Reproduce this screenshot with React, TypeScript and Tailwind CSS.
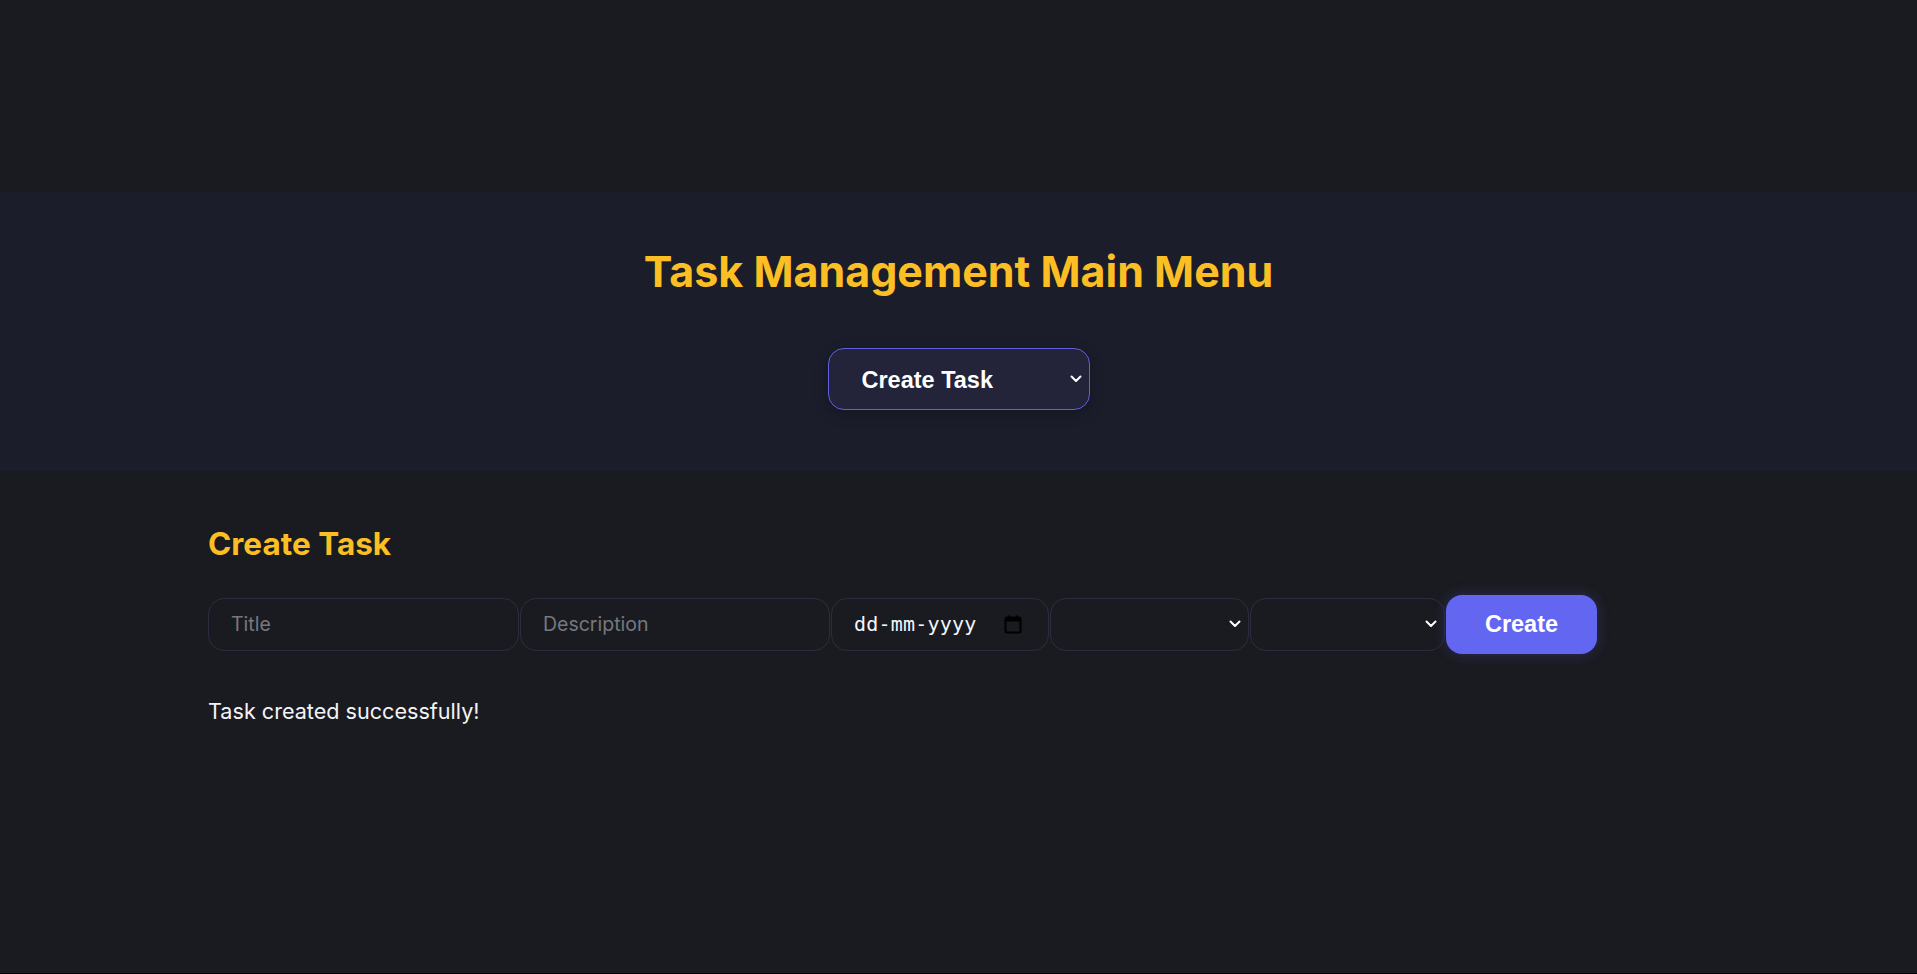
import { useState } from "react";

const Chevron = () => (
  <svg
    className="pointer-events-none absolute right-[8px] top-1/2 -translate-y-1/2"
    width="12"
    height="8"
    viewBox="0 0 12 8"
    fill="none"
  >
    <path d="M1.5 1.5 6 6l4.5-4.5" stroke="#ffffff" strokeWidth="2" strokeLinecap="round" strokeLinejoin="round" />
  </svg>
);

const CalendarIcon = () => (
  <svg width="18" height="19" viewBox="0 0 18 19" fill="none">
    <rect x="4" y="0.5" width="2" height="3" fill="#000" />
    <rect x="12" y="0.5" width="2" height="3" fill="#000" />
    <rect x="1.5" y="2.5" width="15" height="15" rx="1.5" stroke="#000" strokeWidth="2" />
    <rect x="1.5" y="2.5" width="15" height="4" fill="#000" />
  </svg>
);

export default function App() {
  const [view, setView] = useState("create");

  return (
    <div className="min-h-[974px] bg-[#1a1b20] font-['Inter',sans-serif] border-b border-black">
      <div className="h-[192px]" />

      <header className="h-[279px] bg-[#1b1d2b] flex flex-col items-center pt-[58px]">
        <h1 className="text-[43px] leading-none font-bold text-[#fbbf24]">Task Management Main Menu</h1>
        <div className="relative mt-[55px]">
          <select
            value={view}
            onChange={(e) => setView(e.target.value)}
            className="appearance-none w-[262px] h-[62px] rounded-[16px] border border-[#5f5fe0] bg-[#23243a] pl-[33px] pt-[4px] text-[23.5px] font-bold text-white font-['Liberation_Sans',sans-serif] outline-none shadow-[0_4px_14px_rgba(0,0,0,0.25)]"
          >
            <option value="create">Create Task</option>
            <option value="list">View Tasks</option>
          </select>
          <Chevron />
        </div>
      </header>

      <section className="px-[208px] pt-[57px]">
        <h2 className="text-[31.5px] leading-none font-bold text-[#fbbf24]">Create Task</h2>

        <div className="mt-[35px] flex items-center gap-px">
          <input
            placeholder="Title"
            className="w-[311px] h-[53px] rounded-[16px] border border-[#2a2d3e] bg-transparent pl-[22px] text-[19.5px] text-white placeholder:text-[#77787f] outline-none"
          />
          <input
            placeholder="Description"
            className="w-[310px] h-[53px] rounded-[16px] border border-[#2a2d3e] bg-transparent pl-[22px] text-[19.5px] text-white placeholder:text-[#77787f] outline-none"
          />
          <div className="w-[218px] h-[53px] rounded-[16px] border border-[#2a2d3e] flex items-center justify-between pl-[22px] pr-[26px]">
            <span className="font-['DejaVu_Sans_Mono',monospace] text-[20px] text-[#f4f5ff] tracking-[0.2px]">dd-mm-yyyy</span>
            <CalendarIcon />
          </div>
          <div className="relative">
            <select className="appearance-none w-[199px] h-[53px] rounded-[16px] border border-[#2a2d3e] bg-transparent text-white outline-none">
              <option value=""></option>
              <option value="high">High</option>
            </select>
            <Chevron />
          </div>
          <div className="relative">
            <select className="appearance-none w-[195px] h-[53px] rounded-[16px] border border-[#2a2d3e] bg-transparent text-white outline-none">
              <option value=""></option>
              <option value="todo">To Do</option>
            </select>
            <Chevron />
          </div>
          <button className="w-[151px] h-[59px] rounded-[16px] bg-[#6366f1] pt-[2px] text-white text-[23.5px] font-bold font-['Liberation_Sans',sans-serif] shadow-[0_0_14px_rgba(99,102,241,0.25)]">
            Create
          </button>
        </div>

        <p className="mt-[47px] text-[21.6px] leading-none text-[#f3f3f5]">Task created successfully!</p>
      </section>
    </div>
  );
}
